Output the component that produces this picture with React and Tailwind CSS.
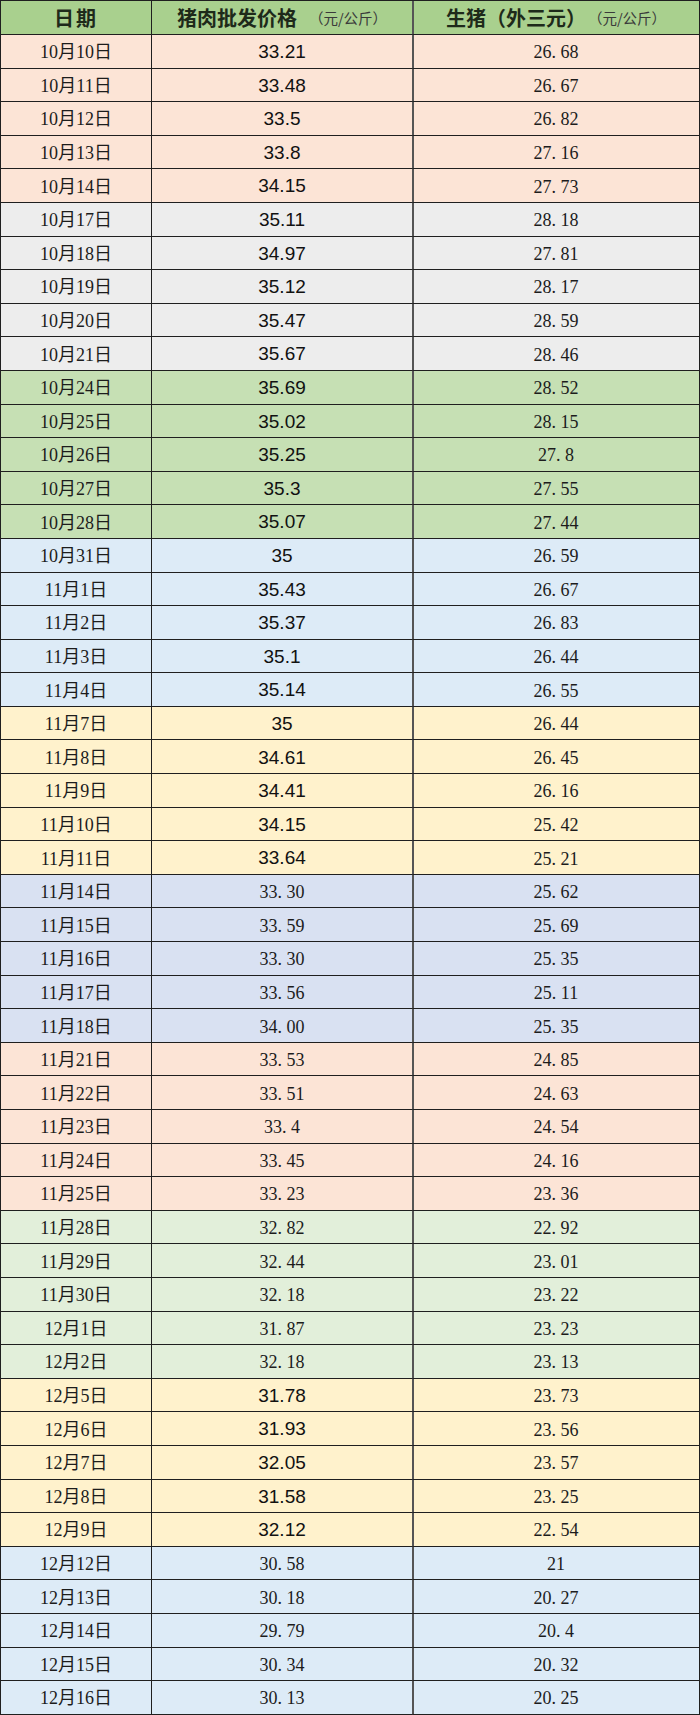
const rows = [
  ['10月10日', '33.21', '26.68'],
  ['10月11日', '33.48', '26.67'],
  ['10月12日', '33.5', '26.82'],
  ['10月13日', '33.8', '27.16'],
  ['10月14日', '34.15', '27.73'],
  ['10月17日', '35.11', '28.18'],
  ['10月18日', '34.97', '27.81'],
  ['10月19日', '35.12', '28.17'],
  ['10月20日', '35.47', '28.59'],
  ['10月21日', '35.67', '28.46'],
  ['10月24日', '35.69', '28.52'],
  ['10月25日', '35.02', '28.15'],
  ['10月26日', '35.25', '27.8'],
  ['10月27日', '35.3', '27.55'],
  ['10月28日', '35.07', '27.44'],
  ['10月31日', '35', '26.59'],
  ['11月1日', '35.43', '26.67'],
  ['11月2日', '35.37', '26.83'],
  ['11月3日', '35.1', '26.44'],
  ['11月4日', '35.14', '26.55'],
  ['11月7日', '35', '26.44'],
  ['11月8日', '34.61', '26.45'],
  ['11月9日', '34.41', '26.16'],
  ['11月10日', '34.15', '25.42'],
  ['11月11日', '33.64', '25.21'],
  ['11月14日', '33.30', '25.62'],
  ['11月15日', '33.59', '25.69'],
  ['11月16日', '33.30', '25.35'],
  ['11月17日', '33.56', '25.11'],
  ['11月18日', '34.00', '25.35'],
  ['11月21日', '33.53', '24.85'],
  ['11月22日', '33.51', '24.63'],
  ['11月23日', '33.4', '24.54'],
  ['11月24日', '33.45', '24.16'],
  ['11月25日', '33.23', '23.36'],
  ['11月28日', '32.82', '22.92'],
  ['11月29日', '32.44', '23.01'],
  ['11月30日', '32.18', '23.22'],
  ['12月1日', '31.87', '23.23'],
  ['12月2日', '32.18', '23.13'],
  ['12月5日', '31.78', '23.73'],
  ['12月6日', '31.93', '23.56'],
  ['12月7日', '32.05', '23.57'],
  ['12月8日', '31.58', '23.25'],
  ['12月9日', '32.12', '22.54'],
  ['12月12日', '30.58', '21'],
  ['12月13日', '30.18', '20.27'],
  ['12月14日', '29.79', '20.4'],
  ['12月15日', '30.34', '20.32'],
  ['12月16日', '30.13', '20.25'],
];

// one colour per week, five rows each
const weekColors = [
  'bg-[#fce4d6]',
  'bg-[#ededed]',
  'bg-[#c6e0b4]',
  'bg-[#ddebf7]',
  'bg-[#fff2cc]',
  'bg-[#d9e1f2]',
  'bg-[#fce4d6]',
  'bg-[#e2efda]',
  'bg-[#fff2cc]',
  'bg-[#ddebf7]',
];

// weeks where the wholesale column was typed in the sans font
const sansWeeks = [0, 1, 2, 3, 4, 8];

const serif = "font-['Liberation_Serif','Noto_Sans_CJK_SC',serif]";
const sans = "font-['Liberation_Sans','Noto_Sans_CJK_SC',sans-serif]";
const cjk = "font-['Noto_Sans_CJK_SC',sans-serif]";

// SimSun style number: the period takes a half-width cell
function SimNum({ value }) {
  const [a, b] = value.split('.');
  return (
    <span className={`${serif} text-[18px] text-[#1c1c1c] pt-[3px]`}>
      {a}
      {b !== undefined && (
        <>
          <span className="inline-block w-[0.5em] text-left">.</span>
          {b}
        </>
      )}
    </span>
  );
}

export default function App() {
  return (
    <div className="w-[700px] h-[1715px] bg-white overflow-hidden">
      <div className="border-l border-t border-[#1f1f1f]">
        <div className="grid grid-cols-[151px_262px_286px] h-[34px] bg-[#a9d08e]">
          <div className={`${cjk} flex items-center justify-center border-r border-b border-[#1f1f1f] text-[20px] font-bold text-[#1e2a1a] tracking-[2px]`}>
            日期
          </div>
          <div className={`${cjk} flex items-center justify-center border-r-2 border-b border-[#1f1f1f] border-r-[#555]`}>
            <span className="text-[20px] font-bold text-[#1e2a1a]">猪肉批发价格</span>
            <span className="ml-[12px] text-[14.5px] text-[#3a3a3a]">（元/公斤）</span>
          </div>
          <div className={`${cjk} flex items-center justify-center border-r border-b border-[#1f1f1f] -ml-px`}>
            <span className="text-[20px] font-bold text-[#1e2a1a]">生猪（外三元）</span>
            <span className="ml-[2px] text-[14.5px] text-[#3a3a3a]">（元/公斤）</span>
          </div>
        </div>

        {rows.map(([date, pork, hog], i) => {
          const week = Math.floor(i / 5);
          const bg = weekColors[week];
          const porkSans = sansWeeks.includes(week);
          return (
            <div key={date} className={`grid grid-cols-[151px_262px_286px] h-[33.6px] ${bg}`}>
              <div className={`${serif} flex items-center justify-center pt-[3px] border-r border-b border-[#1f1f1f] text-[18px] text-[#1c1c1c]`}>
                {date}
              </div>
              <div className="flex items-center justify-center border-r-2 border-b border-[#1f1f1f] border-r-[#555]">
                {porkSans ? (
                  <span className={`${sans} text-[19px] text-[#111] pt-[2px]`}>{pork}</span>
                ) : (
                  <SimNum value={pork} />
                )}
              </div>
              <div className="flex items-center justify-center border-r border-b border-[#1f1f1f] -ml-px">
                <SimNum value={hog} />
              </div>
            </div>
          );
        })}
      </div>
    </div>
  );
}
